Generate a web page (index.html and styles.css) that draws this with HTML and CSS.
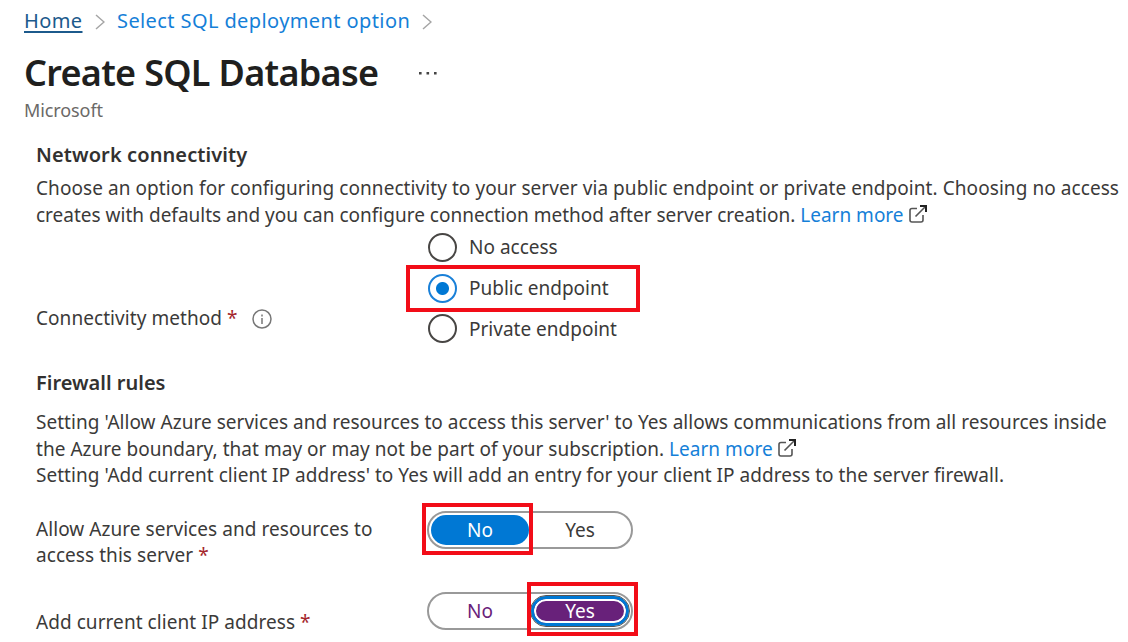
FILE: index.html
```html
<!DOCTYPE html>
<html lang="en">
<head>
    <meta charset="UTF-8">
    <meta name="viewport" content="width=device-width, initial-scale=1.0">
    <title>Create SQL Database</title>
    <link rel="stylesheet" href="styles.css">
</head>
<body>
    <nav class="breadcrumb">
        <a class="home" href="#">Home</a>
        <svg class="chevron" viewBox="0 0 10 16"><path d="M1 1l8 7-8 7"/></svg>
        <a class="crumb" href="#">Select SQL deployment option</a>
        <svg class="chevron" viewBox="0 0 10 16"><path d="M1 1l8 7-8 7"/></svg>
    </nav>

    <header class="title-row">
        <h1>Create SQL Database</h1>
        <svg class="more" viewBox="0 0 18 4"><path d="M0 1h2.6v2.4H0zM7.5 1h2.6v2.4H7.5zM15 1h2.6v2.4H15z"/></svg>
    </header>
    <p class="publisher">Microsoft</p>

    <main class="content">
        <h2>Network connectivity</h2>
        <p class="network-text">
            <span class="wide">Choose an option for configuring connectivity to your server via public endpoint or private endpoint. Choosing no access</span><br>
            <span>creates with defaults and you can configure connection method after server creation. <a href="#">Learn more</a></span>
            <svg class="external" viewBox="0 0 18 18"><path d="M8 3.5H3q-2 0-2 2V15q0 2 2 2h9q2 0 2-2v-5M6.5 11.5L16 2"/><path class="head" d="M11 1h6v6"/></svg>
        </p>

        <div class="method">
            <div class="label">Connectivity method <span class="required">*</span>
                <svg class="info" viewBox="0 0 20 20"><circle cx="10" cy="10" r="9"/><path d="M10 9v6M10 5.5v2"/></svg>
            </div>
            <div class="radios">
                <label class="radio"><span class="dot"></span>No access</label>
                <label class="radio checked"><span class="dot"></span>Public endpoint</label>
                <label class="radio"><span class="dot"></span>Private endpoint</label>
            </div>
        </div>

        <h2 class="firewall-heading">Firewall rules</h2>
        <p class="firewall-text">
            Setting 'Allow Azure services and resources to access this server' to Yes allows communications from all resources inside<br>
            the Azure boundary, that may or may not be part of your subscription. <a href="#">Learn more</a>
            <svg class="external" viewBox="0 0 18 18"><path d="M8 3.5H3q-2 0-2 2V15q0 2 2 2h9q2 0 2-2v-5M6.5 11.5L16 2"/><path class="head" d="M11 1h6v6"/></svg><br>
            Setting 'Add current client IP address' to Yes will add an entry for your client IP address to the server firewall.
        </p>

        <div class="rule">
            <div class="label rule-label">Allow Azure services and resources to<br>access this server <span class="required">*</span></div>
            <div class="toggle">
                <button class="option selected">No</button>
                <button class="option">Yes</button>
                <span class="highlight highlight-no"></span>
            </div>
        </div>
        <div class="rule ip-rule">
            <div class="label rule-label">Add current client IP address <span class="required">*</span></div>
            <div class="toggle">
                <button class="option visited">No</button>
                <button class="option focused">Yes</button>
                <span class="highlight highlight-yes"></span>
            </div>
        </div>
    </main>
</body>
</html>
```
FILE: styles.css
```css
* {
    box-sizing: border-box;
}
body {
    margin: 0;
    padding: 7px 0 0 24px;
    background: #fff;
    color: #3b3a39;
    font-family: "Noto Sans", "Open Sans", sans-serif;
    font-size: 19px;
    line-height: 26.5px;
    white-space: nowrap;
}
h1, h2, p {
    margin: 0;
}
a {
    color: #1580d8;
    text-decoration: none;
}
.breadcrumb {
    display: flex;
    align-items: center;
    height: 28px;
    font-size: 20px;
    letter-spacing: 0.4px;
}
.home {
    width: 59px;
    color: #1c5a8c;
    text-decoration: underline;
    text-underline-offset: 3px;
}
.crumb {
    width: 293px;
}
.chevron {
    width: 10px;
    height: 16px;
    margin: 2px 12px 0;
    fill: none;
    stroke: #a5a5a5;
    stroke-width: 1.5;
}
.title-row {
    display: flex;
    align-items: center;
    height: 60px;
    margin-top: 8px;
}
h1 {
    width: 395px;
    color: #201f1e;
    font-size: 36px;
    font-weight: 600;
    letter-spacing: -0.7px;
    line-height: 60px;
}
.more {
    width: 18px;
    height: 4px;
    fill: #444;
}
.publisher {
    height: 33px;
    margin-top: -6px;
    color: #6b6967;
    font-size: 18px;
    letter-spacing: -0.1px;
}
.content {
    padding-left: 12px;
}
h2 {
    margin-top: 12px;
    color: #323130;
    font-size: 20px;
    font-weight: 600;
    letter-spacing: 0.1px;
    line-height: 26px;
}
.network-text {
    margin-top: 7px;
}
.wide {
    letter-spacing: 0.066px;
}
.external {
    width: 18px;
    height: 18px;
    vertical-align: -1px;
    fill: none;
    stroke: #555;
    stroke-width: 1.6;
}
.head {
    stroke: #222;
    stroke-width: 2;
}
.method {
    display: flex;
    height: 122px;
    margin-top: -1px;
}
.label {
    width: 390px;
    letter-spacing: 0.06px;
}
.method .label {
    padding-top: 78px;
}
.required {
    color: #a4262c;
}
.info {
    width: 20px;
    height: 20px;
    margin-left: 9px;
    vertical-align: -4px;
    fill: none;
    stroke: #777;
    stroke-width: 1.5;
}
.radio {
    display: flex;
    align-items: center;
    gap: 12px;
    height: 40.5px;
    padding-left: 2px;
}
.dot {
    width: 29px;
    height: 29px;
    border: 2px solid #484644;
    border-radius: 50%;
}
.checked {
    width: 234px;
    height: 47px;
    margin: -3px 0 -3px -20px;
    padding-left: 18px;
    border: 4px solid #f20d18;
}
.checked .dot {
    border-color: #1a80d8;
    background: radial-gradient(circle, #0078d4 6px, #fff 7px);
}
.firewall-heading {
    margin-top: 21px;
    letter-spacing: 0;
}
.firewall-text {
    margin-top: 13px;
    letter-spacing: 0.033px;
}
.rule {
    display: flex;
    height: 81px;
    margin-top: 22px;
}
.rule-label {
    width: 391px;
    padding-top: 5px;
}
.toggle {
    display: flex;
    position: relative;
    width: 206px;
    height: 38px;
    border: 2px solid #999;
    border-radius: 19px;
}
.option {
    width: 98px;
    height: 30px;
    margin: 2px 0 2px 2px;
    padding: 0;
    border: none;
    border-radius: 15px;
    background: none;
    color: #3b3a39;
    font: inherit;
    line-height: 30px;
}
.selected {
    background: #0078d4;
    color: #fff;
}
.visited {
    color: #68217a;
}
.focused {
    border: 3px solid #0078d4;
    outline: 1px solid #555;
    box-shadow: inset 0 0 0 2px #fff;
    background: #68217a;
    color: #fff;
    line-height: 24px;
}
.highlight {
    position: absolute;
    border: 4px solid #f20d18;
}
.highlight-no {
    top: -10px;
    left: -7px;
    width: 111px;
    height: 52px;
}
.highlight-yes {
    top: -12px;
    left: 98px;
    width: 111px;
    height: 54px;
}
.ip-rule {
    height: 50px;
    margin-top: 0;
}
.ip-rule .rule-label {
    padding-top: 17px;
}
```
